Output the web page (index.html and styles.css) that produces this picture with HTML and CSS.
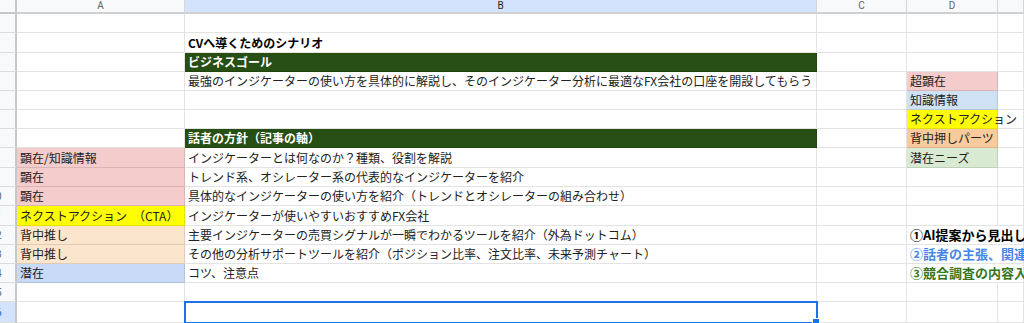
FILE: index.html
```html
<!DOCTYPE html>
<html lang="ja">
<head>
<meta charset="utf-8">
<title>CVへ導くためのシナリオ</title>
<link rel="stylesheet" href="styles.css">
</head>
<body>
<div class="sheet">
  <div class="row head">
    <div class="corner"></div>
    <div class="ch">A</div>
    <div class="ch ch-sel">B</div>
    <div class="ch">C</div>
    <div class="ch">D</div>
    <div class="ch"></div>
  </div>

  <div class="row r19">
    <div class="rh"><span>1</span></div>
    <div class="c"></div><div class="c"></div><div class="c"></div><div class="c"></div><div class="c"></div>
  </div>
  <div class="row r20">
    <div class="rh"><span>2</span></div>
    <div class="c"></div><div class="c bold">CVへ導くためのシナリオ</div><div class="c"></div><div class="c"></div><div class="c"></div>
  </div>
  <div class="row r19">
    <div class="rh"><span>3</span></div>
    <div class="c"></div><div class="c dg">ビジネスゴール</div><div class="c"></div><div class="c"></div><div class="c"></div>
  </div>
  <div class="row r19">
    <div class="rh"><span>4</span></div>
    <div class="c"></div><div class="c">最強のインジケーターの使い方を具体的に解説し、そのインジケーター分析に最適なFX会社の口座を開設してもらう</div><div class="c"></div><div class="c pink">超顕在</div><div class="c"></div>
  </div>
  <div class="row r19">
    <div class="rh"><span>5</span></div>
    <div class="c"></div><div class="c"></div><div class="c"></div><div class="c lblue">知識情報</div><div class="c"></div>
  </div>
  <div class="row r19">
    <div class="rh"><span>6</span></div>
    <div class="c"></div><div class="c"></div><div class="c"></div><div class="c yellow over">ネクストアクション</div><div class="c"></div>
  </div>
  <div class="row r19">
    <div class="rh"><span>7</span></div>
    <div class="c"></div><div class="c dg">話者の方針（記事の軸）</div><div class="c"></div><div class="c peach2">背中押しパーツ</div><div class="c"></div>
  </div>
  <div class="row r20">
    <div class="rh"><span>8</span></div>
    <div class="c pink">顕在/知識情報</div><div class="c">インジケーターとは何なのか？種類、役割を解説</div><div class="c"></div><div class="c lgreen">潜在ニーズ</div><div class="c"></div>
  </div>
  <div class="row r19">
    <div class="rh"><span>9</span></div>
    <div class="c pink">顕在</div><div class="c">トレンド系、オシレーター系の代表的なインジケーターを紹介</div><div class="c"></div><div class="c"></div><div class="c"></div>
  </div>
  <div class="row r19">
    <div class="rh"><span>10</span></div>
    <div class="c pink">顕在</div><div class="c">具体的なインジケーターの使い方を紹介（トレンドとオシレーターの組み合わせ）</div><div class="c"></div><div class="c"></div><div class="c"></div>
  </div>
  <div class="row r20">
    <div class="rh"><span>11</span></div>
    <div class="c yellow">ネクストアクション　（CTA）</div><div class="c">インジケーターが使いやすいおすすめFX会社</div><div class="c"></div><div class="c"></div><div class="c"></div>
  </div>
  <div class="row r19">
    <div class="rh"><span>12</span></div>
    <div class="c peach">背中推し</div><div class="c">主要インジケーターの売買シグナルが一瞬でわかるツールを紹介（外為ドットコム）</div><div class="c"></div><div class="c over bold note nr">①AI提案から見出し</div><div class="c"></div>
  </div>
  <div class="row r19">
    <div class="rh"><span>13</span></div>
    <div class="c peach">背中推し</div><div class="c">その他の分析サポートツールを紹介（ポジション比率、注文比率、未来予測チャート）</div><div class="c"></div><div class="c over bold note blue nr">②話者の主張、関連</div><div class="c"></div>
  </div>
  <div class="row r19">
    <div class="rh"><span>14</span></div>
    <div class="c cblue">潜在</div><div class="c">コツ、注意点</div><div class="c"></div><div class="c over bold note green nr">③競合調査の内容入</div><div class="c"></div>
  </div>
  <div class="row r19">
    <div class="rh"><span>15</span></div>
    <div class="c"></div><div class="c"></div><div class="c"></div><div class="c"></div><div class="c"></div>
  </div>
  <div class="row r21">
    <div class="rh rh-sel"><span>16</span></div>
    <div class="c"></div><div class="c sel"></div><div class="c"></div><div class="c"></div><div class="c"></div>
  </div>
</div>
</body>
</html>
```

FILE: styles.css
```css
html, body {
  margin: 0;
  padding: 0;
  background: #ffffff;
  overflow: hidden;
}

.sheet {
  width: 1024px;
  height: 323px;
  overflow: hidden;
  font-family: "Noto Sans CJK JP", "Noto Sans", sans-serif;
  font-size: 12px;
  color: #222222;
}

.row {
  display: grid;
  grid-template-columns: 17px 168px 632px 90px 91px 1fr;
}

.head { height: 14px; }
.r19 { height: 19px; }
.r20 { height: 20px; }
.r21 { height: 21px; }

.corner {
  box-sizing: border-box;
  background: #f8f9fa;
  border-right: 2px solid #c7c7c7;
  border-bottom: 2px solid #c7c7c7;
}

.ch {
  box-sizing: border-box;
  background: #f8f9fa;
  border-right: 1px solid #d6d6d6;
  border-bottom: 2px solid #d0d0d0;
  font-family: Roboto, "Liberation Sans", sans-serif;
  font-size: 10px;
  line-height: 12px;
  color: #5f6368;
  text-align: center;
}

.ch-sel {
  background: #d3e3fd;
  color: #1f1f1f;
}

.rh {
  box-sizing: border-box;
  overflow: hidden;
  background: #f8f9fa;
  border-right: 2px solid #c7c7c7;
  border-bottom: 1px solid #dcdcdc;
  font-family: Roboto, "Liberation Sans", sans-serif;
  font-size: 10px;
  color: #5f6368;
  display: flex;
  align-items: center;
}

.rh span {
  display: block;
  flex: none;
  width: 46px;
  margin-left: -27px;
  text-align: center;
}

.rh-sel {
  background: #d3e3fd;
  color: #0b57d0;
}

.c {
  box-sizing: border-box;
  border-right: 1px solid rgba(0, 0, 0, 0.11);
  border-bottom: 1px solid rgba(0, 0, 0, 0.11);
  padding: 0 3px 1px 3px;
  display: flex;
  align-items: flex-end;
  line-height: 17px;
  white-space: nowrap;
  overflow: hidden;
}

.over { overflow: visible; }
.nr { border-right-color: transparent; }

.bold { font-weight: 700; color: #000000; }
.note { font-size: 13px; }
.blue { color: #4a86e8; }
.green { color: #38761d; }

.dg {
  background: #274e13;
  color: #ffffff;
  font-weight: 700;
}

.pink { background: #f4cccc; }
.lblue { background: #cfe2f3; }
.cblue { background: #c9daf8; }
.yellow { background: #ffff00; }
.peach { background: #fce5cd; }
.peach2 { background: #f9cb9c; }
.lgreen { background: #d9ead3; }

.sel {
  position: relative;
  overflow: visible;
  outline: 2px solid #1a73e8;
  outline-offset: -1px;
}

.sel::after {
  content: "";
  position: absolute;
  right: -4px;
  bottom: -4px;
  width: 6px;
  height: 6px;
  background: #1a73e8;
  border: 1px solid #ffffff;
  border-radius: 1px;
}
```
